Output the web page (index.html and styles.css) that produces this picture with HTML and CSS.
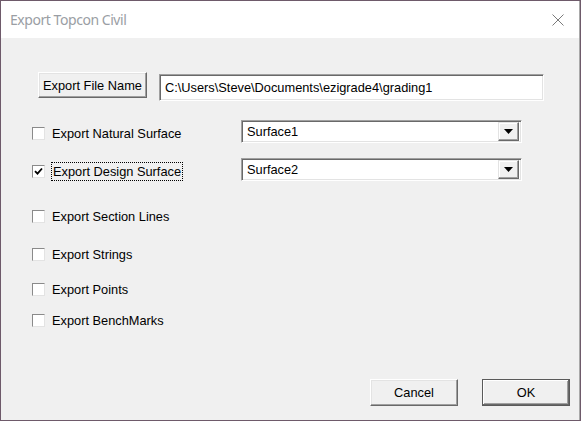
FILE: index.html
```html
<!DOCTYPE html>
<html>
<head>
<meta charset="utf-8">
<link rel="stylesheet" href="styles.css">
</head>
<body>
<div class="window">
  <div class="titlebar">
    <span class="title">Export Topcon Civil</span>
    <svg class="close" width="12" height="12" viewBox="0 0 12 12"><path d="M0.5 0.5 L11.5 11.5 M11.5 0.5 L0.5 11.5" stroke="#7a7a7a" stroke-width="1" fill="none"/></svg>
  </div>
  <div class="client">
    <div class="file-row">
      <div class="btn file-btn">Export File Name</div>
      <div class="textbox">C:\Users\Steve\Documents\ezigrade4\grading1</div>
    </div>

    <div class="opt-row row-natural">
      <div class="check-col">
        <span class="box"></span>
        <span class="label">Export Natural Surface</span>
      </div>
      <div class="combo">
        <span class="combo-text">Surface1</span>
        <span class="drop"><svg width="9" height="5" viewBox="0 0 9 5"><path d="M0 0 H9 L4.5 5 Z" fill="#000"/></svg></span>
      </div>
    </div>

    <div class="opt-row row-design">
      <div class="check-col">
        <span class="box checked"><svg width="9" height="9" viewBox="0 0 9 9"><path d="M1 4.2 L3.5 6.7 L8 1.5" stroke="#000" stroke-width="1.8" fill="none"/></svg></span>
        <span class="label focus">Export Design Surface</span>
      </div>
      <div class="combo">
        <span class="combo-text">Surface2</span>
        <span class="drop"><svg width="9" height="5" viewBox="0 0 9 5"><path d="M0 0 H9 L4.5 5 Z" fill="#000"/></svg></span>
      </div>
    </div>

    <div class="check-row row-section"><span class="box"></span><span class="label">Export Section Lines</span></div>
    <div class="check-row row-strings"><span class="box"></span><span class="label">Export Strings</span></div>
    <div class="check-row row-points"><span class="box"></span><span class="label">Export Points</span></div>
    <div class="check-row row-bench"><span class="box"></span><span class="label">Export BenchMarks</span></div>

    <div class="footer">
      <div class="btn action">Cancel</div>
      <div class="btn action default">OK</div>
    </div>
  </div>
</div>
</body>
</html>
```

FILE: styles.css
```css
html, body {
  margin: 0;
  padding: 0;
  background: #6e5a6a;
}
body {
  width: 581px;
  height: 421px;
  overflow: hidden;
}
.window {
  margin: 1px 1px 0 1px;
  width: 578px;
  height: 419px;
  border-right: 1px solid #a9a9a9;
  background: #f0f0f0;
  display: flex;
  flex-direction: column;
  font-family: "Liberation Sans", Arial, sans-serif;
  font-size: 12.8px;
  color: #000;
}
.titlebar {
  height: 37px;
  background: #fff;
  display: flex;
  align-items: center;
  justify-content: space-between;
  padding: 0 15px 0 9px;
  box-sizing: border-box;
}
.title {
  font-family: "Noto Sans", "Open Sans", sans-serif;
  font-size: 14px;
  color: #9a9ea4;
  letter-spacing: -0.45px;
  margin-top: -1px;
}
.close {
  display: block;
}
.client {
  flex: 1;
  display: flex;
  flex-direction: column;
  padding-left: 31px;
}
.file-row {
  display: flex;
  align-items: flex-start;
  margin-top: 34px;
  padding-left: 6px;
}
.btn {
  box-sizing: border-box;
  display: flex;
  align-items: center;
  justify-content: center;
  background: #f0f0f0;
  border: 1px solid;
  border-color: #ffffff #696969 #696969 #ffffff;
  box-shadow: inset -1px -1px 0 #a0a0a0, inset 1px 1px 0 #e3e3e3;
}
.file-btn {
  width: 109px;
  height: 26px;
}
.textbox {
  box-sizing: border-box;
  margin-left: 12px;
  margin-top: 2px;
  width: 385px;
  height: 27px;
  background: #fff;
  border: 1px solid;
  border-color: #a0a0a0 #ffffff #ffffff #a0a0a0;
  box-shadow: inset 1px 1px 0 #696969, inset -1px -1px 0 #e3e3e3;
  padding-left: 5px;
  display: flex;
  align-items: center;
}
.opt-row {
  display: flex;
  align-items: center;
  height: 23px;
}
.row-natural { margin-top: 19px; }
.row-design { margin-top: 15px; }
.check-col {
  width: 209px;
  display: flex;
  align-items: center;
  margin-top: 3px;
}
.box {
  box-sizing: border-box;
  flex: none;
  width: 13px;
  height: 13px;
  background: #fff;
  border: 1px solid;
  border-color: #8a8a8a #e3e3e3 #e3e3e3 #8a8a8a;
  display: flex;
  align-items: center;
  justify-content: center;
}
.label {
  margin-left: 7px;
  line-height: 15px;
  white-space: nowrap;
}
.label.focus {
  outline: 1px dotted #000;
  outline-offset: 1px;
  margin-left: 8px;
}
.combo {
  box-sizing: border-box;
  width: 281px;
  height: 23px;
  background: #fff;
  border: 1px solid;
  border-color: #a0a0a0 #ffffff #ffffff #a0a0a0;
  box-shadow: inset 1px 1px 0 #696969, inset -1px -1px 0 #e3e3e3;
  display: flex;
  align-items: center;
  justify-content: space-between;
  padding: 2px 2px 2px 5px;
}
.drop {
  box-sizing: border-box;
  width: 21px;
  height: 19px;
  background: #f0f0f0;
  border: 1px solid;
  border-color: #e3e3e3 #696969 #696969 #e3e3e3;
  box-shadow: inset -1px -1px 0 #a0a0a0, inset 1px 1px 0 #ffffff;
  display: flex;
  align-items: center;
  justify-content: center;
}
.drop svg { display: block; }
.check-row {
  display: flex;
  align-items: center;
  height: 13px;
}
.row-section { margin-top: 29px; }
.row-strings { margin-top: 25px; }
.row-points { margin-top: 22px; }
.row-bench { margin-top: 18px; }
.footer {
  margin-top: auto;
  display: flex;
  justify-content: flex-end;
  gap: 24px;
  padding-right: 9px;
  padding-bottom: 14px;
}
.action {
  width: 88px;
  height: 27px;
}
.default {
  border: 1px solid #5a5a5a;
  box-shadow: inset -1px -1px 0 #696969, inset 1px 1px 0 #ffffff, inset -2px -2px 0 #a0a0a0;
}
```
